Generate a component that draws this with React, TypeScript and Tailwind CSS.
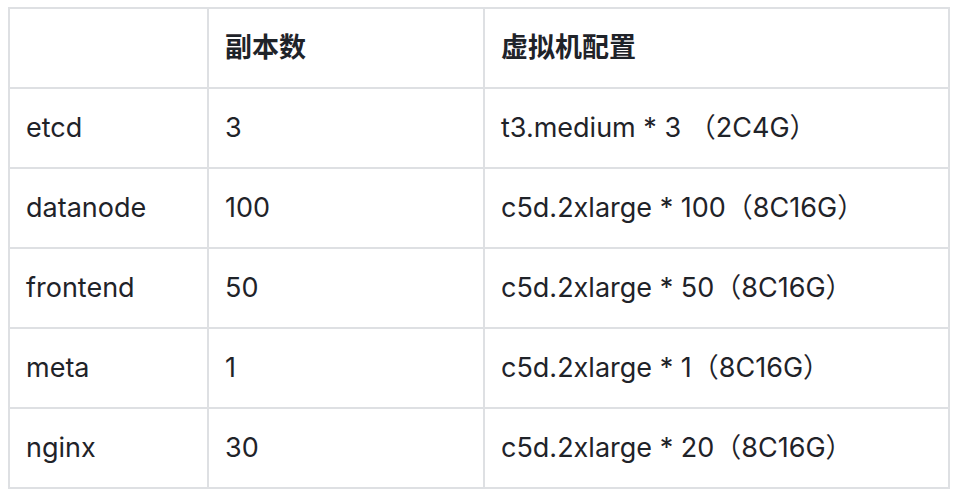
import React from 'react'

const rows = [
  ['etcd', '3', 't3.medium * 3 （2C4G）'],
  ['datanode', '100', 'c5d.2xlarge * 100（8C16G）'],
  ['frontend', '50', 'c5d.2xlarge * 50（8C16G）'],
  ['meta', '1', 'c5d.2xlarge * 1（8C16G）'],
  ['nginx', '30', 'c5d.2xlarge * 20（8C16G）'],
]

const cell = 'border-2 border-[#dee0e3] h-[80px] px-4 text-left align-middle'

const App = () => {
  return (
    <div className="min-h-screen bg-white pt-[7px] pl-[8px] text-[#1f2329] font-['Inter','Noto_Sans_CJK_SC',sans-serif] text-[27px]">
      <table className="border-collapse table-fixed w-[942px]">
        <colgroup>
          <col className="w-[199px]" />
          <col className="w-[276px]" />
          <col />
        </colgroup>
        <thead>
          <tr>
            <th className={cell}></th>
            <th className={`${cell} font-bold`}>副本数</th>
            <th className={`${cell} font-bold`}>虚拟机配置</th>
          </tr>
        </thead>
        <tbody>
          {rows.map((r) => (
            <tr key={r[0]}>
              <td className={cell}>{r[0]}</td>
              <td className={cell}>{r[1]}</td>
              <td className={cell}>{r[2]}</td>
            </tr>
          ))}
        </tbody>
      </table>
    </div>
  )
}

export default App
